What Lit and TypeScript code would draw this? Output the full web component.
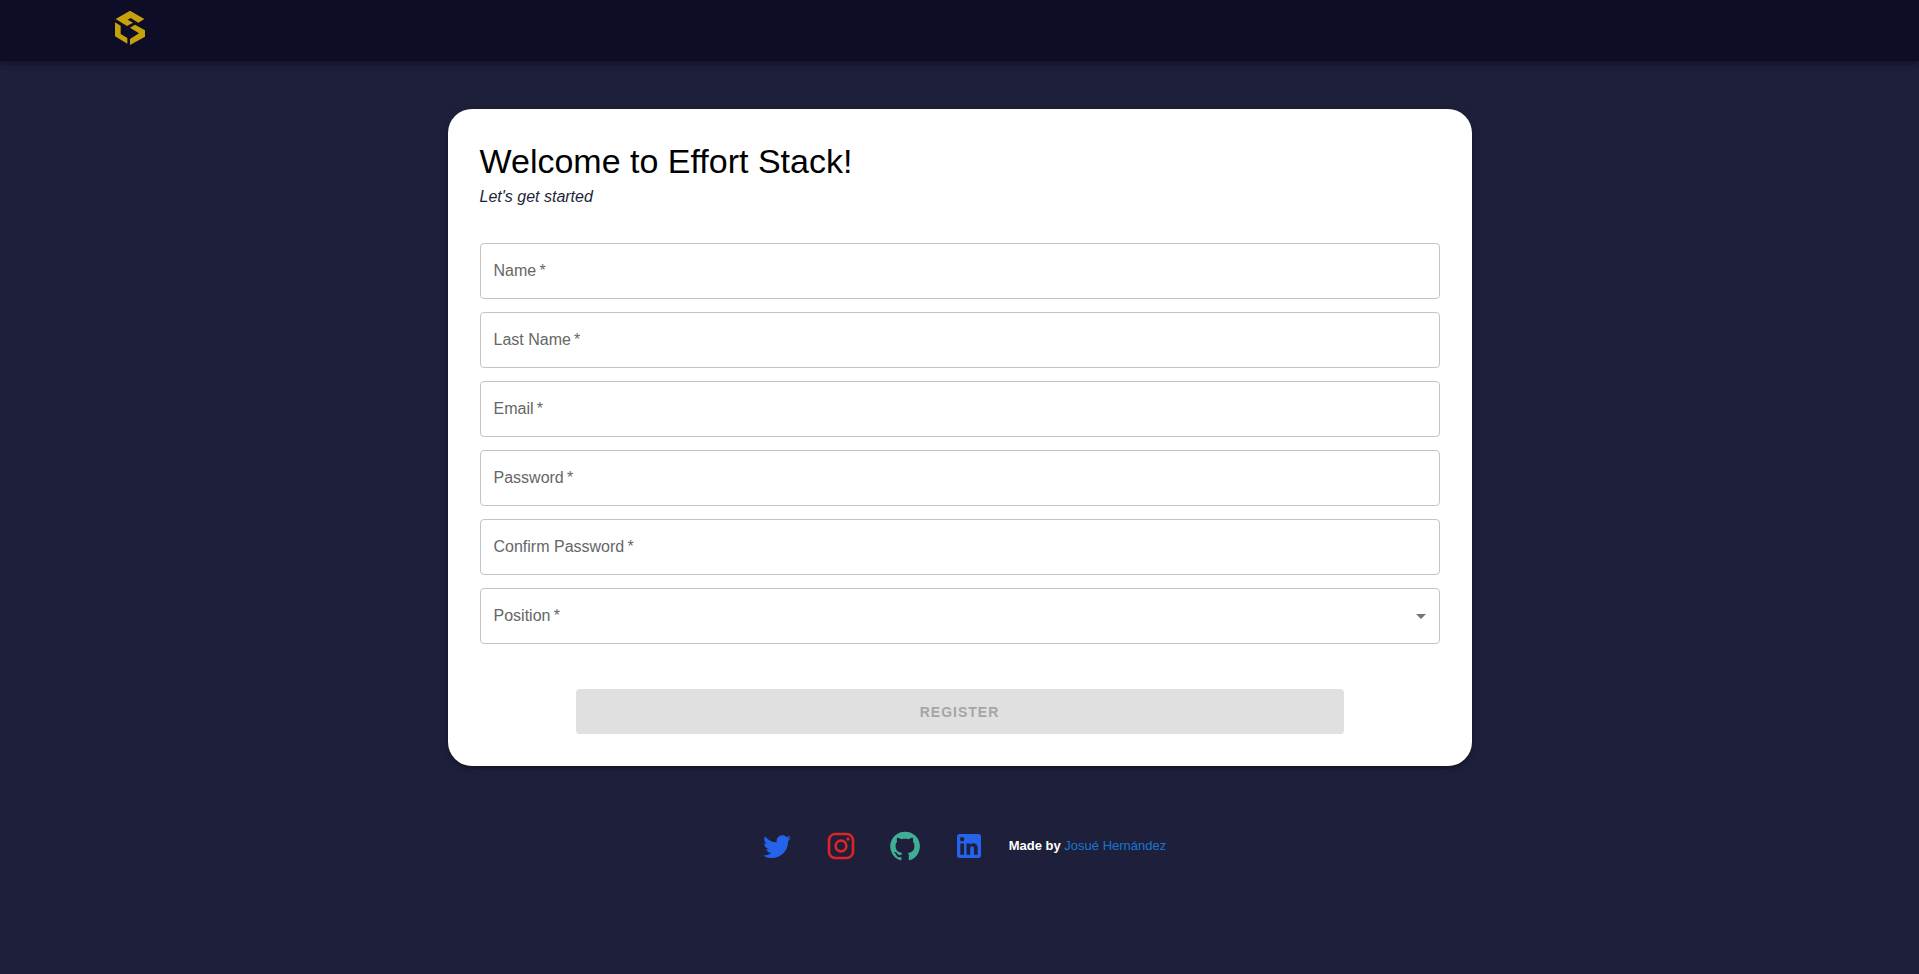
import { LitElement, html, css } from "lit";
import { customElement } from "lit/decorators.js";

interface Field {
  id: string;
  label: string;
  type: string;
}

const FIELDS: Field[] = [
  { id: "name", label: "Name", type: "text" },
  { id: "last-name", label: "Last Name", type: "text" },
  { id: "email", label: "Email", type: "email" },
  { id: "password", label: "Password", type: "password" },
  { id: "confirm-password", label: "Confirm Password", type: "password" },
];

const SOCIALS = [
  {
    name: "Twitter",
    tone: "blue",
    path: "M22.46 6c-.77.35-1.6.58-2.46.69.88-.53 1.56-1.37 1.88-2.38-.83.5-1.75.85-2.72 1.05C18.37 4.5 17.26 4 16 4c-2.35 0-4.27 1.92-4.27 4.29 0 .34.04.67.11.98C8.28 9.09 5.11 7.38 3 4.79c-.37.63-.58 1.37-.58 2.15 0 1.49.75 2.81 1.91 3.56-.71 0-1.37-.2-1.95-.5v.03c0 2.08 1.48 3.82 3.44 4.21a4.22 4.22 0 0 1-1.93.07 4.28 4.28 0 0 0 4 2.98 8.521 8.521 0 0 1-5.33 1.84c-.34 0-.68-.02-1.02-.06C3.44 20.29 5.7 21 8.12 21 16 21 20.33 14.46 20.33 8.79c0-.19 0-.37-.01-.56.84-.6 1.56-1.36 2.14-2.23z",
  },
  {
    name: "Instagram",
    tone: "red",
    path: "M7.8 2h8.4C19.4 2 22 4.6 22 7.8v8.4a5.8 5.8 0 0 1-5.8 5.8H7.8C4.6 22 2 19.4 2 16.2V7.8A5.8 5.8 0 0 1 7.8 2m-.2 2A3.6 3.6 0 0 0 4 7.6v8.8C4 18.39 5.61 20 7.6 20h8.8a3.6 3.6 0 0 0 3.6-3.6V7.6C20 5.61 18.39 4 16.4 4H7.6m9.65 1.5a1.25 1.25 0 0 1 1.25 1.25A1.25 1.25 0 0 1 17.25 8 1.25 1.25 0 0 1 16 6.75a1.25 1.25 0 0 1 1.25-1.25M12 7a5 5 0 0 1 5 5 5 5 0 0 1-5 5 5 5 0 0 1-5-5 5 5 0 0 1 5-5m0 2a3 3 0 0 0-3 3 3 3 0 0 0 3 3 3 3 0 0 0 3-3 3 3 0 0 0-3-3z",
  },
  {
    name: "GitHub",
    tone: "green",
    path: "M12 1.27a11 11 0 00-3.48 21.46c.55.09.73-.28.73-.55v-1.84c-3.03.64-3.67-1.46-3.67-1.46-.55-1.29-1.28-1.65-1.28-1.65-.92-.65.1-.65.1-.65 1.1 0 1.73 1.1 1.73 1.1.92 1.65 2.57 1.2 3.21.92a2 2 0 01.64-1.47c-2.47-.27-5.04-1.19-5.04-5.5 0-1.1.46-2.1 1.2-2.84a3.76 3.76 0 010-2.93s.91-.28 3.11 1.1c1.8-.49 3.7-.49 5.5 0 2.1-1.38 3.02-1.1 3.02-1.1a3.76 3.76 0 01.1 2.93c.83.74 1.2 1.74 1.2 2.94 0 4.21-2.57 5.13-5.04 5.4.45.37.82.92.82 2.02v3.03c0 .27.1.64.73.55A11 11 0 0012 1.27",
  },
  {
    name: "LinkedIn",
    tone: "blue",
    path: "M19 3a2 2 0 0 1 2 2v14a2 2 0 0 1-2 2H5a2 2 0 0 1-2-2V5a2 2 0 0 1 2-2h14m-.5 15.5v-5.3a3.26 3.26 0 0 0-3.26-3.26c-.85 0-1.84.52-2.32 1.3v-1.11h-2.79v8.37h2.79v-4.93c0-.77.62-1.4 1.39-1.4a1.4 1.4 0 0 1 1.4 1.4v4.93h2.79M6.88 8.56a1.68 1.68 0 0 0 1.68-1.68c0-.93-.75-1.69-1.68-1.69a1.69 1.69 0 0 0-1.69 1.69c0 .93.76 1.68 1.69 1.68m1.39 9.94v-8.37H5.5v8.37h2.77z",
  },
];

@customElement("app-root")
export class AppRoot extends LitElement {
  static styles = css`
    :host {
      display: flex;
      flex-direction: column;
      min-height: 100vh;
      background: #1e1f3a;
      font-family: "Liberation Sans", Arial, sans-serif;
      font-size: 16px;
      line-height: 24px;
      color: #000;
    }
    *,
    *::before,
    *::after {
      box-sizing: border-box;
    }
    .bar {
      display: flex;
      padding: 10px 115px 16px;
      background: #0d0d28;
      box-shadow: 0 2px 4px -1px rgba(0, 0, 0, 0.2), 0 4px 5px rgba(0, 0, 0, 0.14),
        0 1px 10px rgba(0, 0, 0, 0.12);
    }
    .home,
    .logo {
      display: block;
    }
    .logo {
      width: 30px;
      height: 35px;
      fill: #c7a10a;
    }
    .main {
      padding: 48px 24px 0;
    }
    .card {
      max-width: 1024px;
      margin: 0 auto;
      padding: 32px;
      border-radius: 24px;
      background: #fff;
      box-shadow: 0 3px 3px -2px rgba(0, 0, 0, 0.2), 0 3px 4px rgba(0, 0, 0, 0.14),
        0 1px 8px rgba(0, 0, 0, 0.12);
    }
    .title {
      margin: 0 0 2px;
      font-size: 34px;
      line-height: 40px;
      font-weight: 400;
    }
    .subtitle {
      margin: 0 0 32px;
      line-height: 28px;
      font-style: italic;
      color: #1e1f3a;
    }
    .form {
      display: flex;
      flex-direction: column;
      gap: 13px;
    }
    .field {
      display: grid;
      align-items: center;
      height: 56px;
      border: 1px solid #c4c4c4;
      border-radius: 4px;
    }
    .field > * {
      grid-area: 1 / 1;
    }
    .label {
      padding: 0 13px;
      color: #666;
      pointer-events: none;
    }
    .control {
      width: 100%;
      height: 100%;
      padding: 0 13px;
      border: 0;
      border-radius: 4px;
      outline: 0;
      background: transparent;
      font: inherit;
      appearance: none;
    }
    .field:focus-within {
      border-color: #1976d2;
    }
    .control:not(:placeholder-shown):not(.select) + .label,
    .select:valid + .label {
      visibility: hidden;
    }
    .arrow {
      justify-self: end;
      width: 24px;
      height: 24px;
      margin-right: 6px;
      fill: #757575;
      pointer-events: none;
    }
    .submit {
      align-self: center;
      width: 80%;
      height: 45px;
      margin-top: 32px;
      border: 0;
      border-radius: 4px;
      background: #e0e0e0;
      color: #a6a6a6;
      font: 700 14px/24px "Liberation Sans", Arial, sans-serif;
      letter-spacing: 1px;
      text-transform: uppercase;
    }
    .footer {
      display: flex;
      flex-wrap: wrap;
      align-items: center;
      justify-content: center;
      gap: 16px;
      padding: 56px 24px;
    }
    .social {
      display: block;
      padding: 8px;
      border-radius: 50%;
    }
    .glyph {
      display: block;
      width: 32px;
      height: 32px;
      fill: currentColor;
    }
    .blue {
      color: #2563eb;
    }
    .red {
      color: #dc2626;
    }
    .green {
      color: #3fae94;
    }
    .credit {
      margin: 0;
      font-size: 13px;
      line-height: 20px;
      font-weight: 700;
      color: #fff;
    }
    .author {
      font-weight: 400;
      color: #1976d2;
      text-decoration: none;
    }
  `;

  render() {
    return html`
      <header class="bar">
        <a class="home" href="#" aria-label="Effort Stack">
          <svg class="logo" viewBox="0 0 90 105" aria-hidden="true">
            <path d="M2 27 L45 2 L88 27 L70 38 L47 24 L38 29 L54 38 L36 48 Z" />
            <path d="M0 37 L17 47 V72 L37 84 V101 L0 79 Z" />
            <path d="M45 53 L60 44 L90 61 V80 L45 105 V87 L72 70 Z" />
          </svg>
        </a>
      </header>
      <main class="main">
        <section class="card">
          <h1 class="title">Welcome to Effort Stack!</h1>
          <p class="subtitle">Let's get started</p>
          <form class="form">
            ${FIELDS.map(
              (f) => html`
                <div class="field">
                  <input class="control" id=${f.id} type=${f.type} placeholder=" " required />
                  <label class="label" for=${f.id}>${f.label}&thinsp;*</label>
                </div>
              `
            )}
            <div class="field">
              <select class="control select" id="position" required>
                <option value="" selected></option>
              </select>
              <label class="label" for="position">Position&thinsp;*</label>
              <svg class="arrow" viewBox="0 0 24 24" aria-hidden="true"><path d="M7 10l5 5 5-5z" /></svg>
            </div>
            <button class="submit" type="submit" disabled>Register</button>
          </form>
        </section>
      </main>
      <footer class="footer">
        ${SOCIALS.map(
          (s) => html`
            <a class="social ${s.tone}" href="#" aria-label=${s.name}>
              <svg class="glyph" viewBox="0 0 24 24" aria-hidden="true"><path d=${s.path} /></svg>
            </a>
          `
        )}
        <p class="credit">Made by <a class="author" href="#">Josué Hernández</a></p>
      </footer>
    `;
  }
}
